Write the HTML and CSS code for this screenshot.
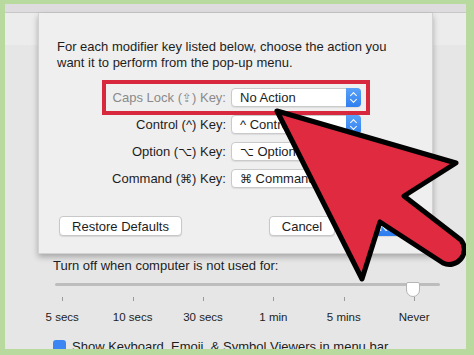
FILE: index.html
```html
<!DOCTYPE html>
<html lang="en">
<head>
    <meta charset="UTF-8">
    <title>Modifier Keys</title>
    <link rel="stylesheet" href="styles.css">
</head>
<body>
    <div class="frame">
        <div class="window-top"></div>

        <div class="sheet">
            <p class="intro">For each modifier key listed below, choose the action you want it to perform from the pop-up menu.</p>

            <div class="key-rows">
                <div class="key-row highlighted">
                    <span class="key-label dim">Caps Lock (<span class="sym">⇪</span>) Key:</span>
                    <div class="popup"><span>No Action</span><i class="stepper"></i></div>
                </div>
                <div class="key-row">
                    <span class="key-label">Control (^) Key:</span>
                    <div class="popup"><span>^ Control</span><i class="stepper"></i></div>
                </div>
                <div class="key-row">
                    <span class="key-label">Option (<span class="sym">⌥</span>) Key:</span>
                    <div class="popup"><span><span class="sym">⌥</span> Option</span><i class="stepper"></i></div>
                </div>
                <div class="key-row">
                    <span class="key-label">Command (<span class="sym">⌘</span>) Key:</span>
                    <div class="popup"><span><span class="sym">⌘</span> Command</span><i class="stepper"></i></div>
                </div>
            </div>

            <div class="sheet-buttons">
                <button class="btn restore">Restore Defaults</button>
                <span class="spacer"></span>
                <button class="btn cancel">Cancel</button>
                <button class="btn primary">OK</button>
            </div>
        </div>

        <div class="prefs">
            <p class="prefs-label">Turn off when computer is not used for:</p>
            <div class="slider">
                <div class="track"></div>
                <div class="thumb"></div>
            </div>
            <div class="ticks">
                <span>5 secs</span>
                <span>10 secs</span>
                <span>30 secs</span>
                <span>1 min</span>
                <span>5 mins</span>
                <span>Never</span>
            </div>
            <label class="check"><i class="box"></i>Show Keyboard, Emoji, &amp; Symbol Viewers in menu bar</label>
        </div>

        <!-- annotation arrow -->
        <svg class="arrow" viewBox="0 0 474 355" width="474" height="355">
            <path d="M277,111 L456,163 L404,196 L461,240 A15,15 0 0 1 443,263 L380,222 L362,279 Z"
                  fill="#e02a40" stroke="#000" stroke-width="5" stroke-linejoin="round"/>
        </svg>
    </div>
</body>
</html>
```

FILE: styles.css
```css
* {
    margin: 0;
    padding: 0;
    box-sizing: border-box;
}

body {
    font-family: "Liberation Sans", Arial, sans-serif;
    background: #fff;
}

.frame {
    position: relative;
    width: 474px;
    height: 355px;
    overflow: hidden;
    border: solid #b8da9e;
    border-width: 4px 8px 6px 5px;
    background:
        linear-gradient(#ececec, #ececec) 0 9px / 100% 32px no-repeat,
        #e6e6e6;
}

.window-top {
    height: 9px;
    background: #dedcde;
    border-bottom: 1px solid #c9c8c9;
}

.sheet {
    margin: 0 33px;
    height: 241px;
    padding: 26px 19px 17px 18px;
    background: #efefef;
    border: 1px solid #d2d2d2;
    border-top: none;
    box-shadow: 0 3px 6px rgba(0, 0, 0, 0.28);
    display: flex;
    flex-direction: column;
}

.intro {
    font-size: 13px;
    line-height: 16px;
    color: #1d1d1d;
}

.key-rows {
    margin: 13px 0 0 49px;
    width: 260px;
}

.key-row {
    display: grid;
    grid-template-columns: 120px 130px;
    column-gap: 5px;
    align-items: center;
    height: 27px;
}

.key-row.highlighted {
    outline: 4px solid #d8283e;
}

.key-label {
    text-align: right;
    font-size: 13px;
    color: #1d1d1d;
    white-space: nowrap;
}

.key-label.dim {
    color: #8a8a8a;
}

.sym {
    font-family: "DejaVu Sans", sans-serif;
    font-size: 12px;
}

.popup {
    position: relative;
    height: 19px;
    background: #fff;
    border: 1px solid #cacaca;
    border-radius: 4px;
    font-size: 13px;
    color: #1d1d1d;
    line-height: 17px;
    padding-left: 8px;
    box-shadow: 0 1px 1px rgba(0, 0, 0, 0.08);
}

.stepper {
    position: absolute;
    top: -1px;
    right: -1px;
    width: 15px;
    height: 19px;
    border-radius: 0 4px 4px 0;
    background: linear-gradient(#5aa2f8, #2f7ff0);
}

.stepper::before,
.stepper::after {
    content: "";
    position: absolute;
    left: 5px;
    width: 4px;
    height: 4px;
    border: solid #fff;
    border-width: 1.5px 0 0 1.5px;
}

.stepper::before {
    top: 5px;
    transform: rotate(45deg);
}

.stepper::after {
    top: 9px;
    transform: rotate(225deg);
}

.sheet-buttons {
    margin-top: auto;
    display: flex;
    gap: 8px;
    padding-left: 2px;
}

.spacer {
    flex: 1;
}

.btn {
    height: 20px;
    font-family: inherit;
    font-size: 13px;
    color: #1d1d1d;
    background: #fff;
    border: 1px solid #c8c8c8;
    border-radius: 4px;
    box-shadow: 0 1px 1px rgba(0, 0, 0, 0.1);
}

.restore {
    width: 123px;
}

.cancel {
    width: 66px;
}

.primary {
    width: 70px;
    color: #fff;
    border-color: #2f7ff0;
    background: linear-gradient(#5aa2f8, #2c7cf0);
}

.prefs {
    padding: 4px 0 0 48px;
}

.prefs-label {
    font-size: 13px;
    line-height: 16px;
    color: #1d1d1d;
}

.slider {
    position: relative;
    margin: 9px 0 0 2px;
    width: 385px;
    height: 14px;
}

.track {
    margin-top: 5px;
    height: 3px;
    border-radius: 2px;
    background: #bdbdbd;
}

.thumb {
    position: absolute;
    left: 351px;
    top: -1px;
    width: 14px;
    height: 15px;
    background: #fff;
    border: 1px solid #b5b5b5;
    border-radius: 2px 2px 7px 7px;
}

.ticks {
    display: grid;
    grid-template-columns: repeat(6, 70.4px);
    margin-left: -26px;
}

.ticks span {
    position: relative;
    text-align: center;
    font-size: 11.5px;
    line-height: 13px;
    color: #1d1d1d;
    padding-top: 14px;
}

.ticks span::before {
    content: "";
    position: absolute;
    top: 0;
    left: 50%;
    width: 1px;
    height: 4px;
    background: #9a9a9a;
}

.check {
    display: flex;
    align-items: center;
    gap: 6px;
    margin-top: 15px;
    font-size: 13px;
    color: #1d1d1d;
    white-space: nowrap;
}

.box {
    width: 13px;
    height: 13px;
    border-radius: 3px;
    background: #3b86f3;
}

.arrow {
    position: absolute;
    left: -5px;
    top: -4px;
}
```
